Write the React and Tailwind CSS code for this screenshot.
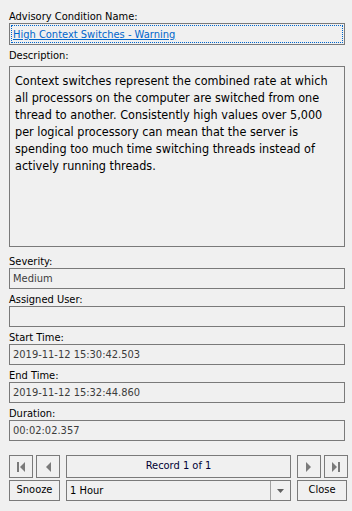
import React, { useState } from "react";

const font = { fontFamily: '"DejaVu Sans Condensed", "DejaVu Sans", sans-serif' };

const Field = ({ label, value }) => (
  <div className="flex flex-col">
    <div className="h-[13px] leading-[13px] text-[11px] text-black">{label}</div>
    <div className="h-[21px] border border-[#7a7a7a] px-[3px] text-[11px] leading-[19px] text-[#3c3c3c] bg-[#f0f0f0]">
      {value}
    </div>
  </div>
);

const NavIcon = ({ dir, bar }) => (
  <svg width="10" height="12" viewBox="0 0 10 12">
    {dir === "left" ? (
      <>
        {bar && <rect x="1" y="1" width="2" height="10" fill="#7a7a7a" />}
        <polygon points={bar ? "9,1 4,6 9,11" : "8,1 3,6 8,11"} fill="#7a7a7a" />
      </>
    ) : (
      <>
        <polygon points={bar ? "1,1 6,6 1,11" : "2,1 7,6 2,11"} fill="#7a7a7a" />
        {bar && <rect x="7" y="1" width="2" height="10" fill="#7a7a7a" />}
      </>
    )}
  </svg>
);

const NavButton = ({ children }) => (
  <button className="shrink-0 w-[24px] h-[23px] border border-[#7a7a7a] bg-[#f0f0f0] flex items-center justify-center">
    {children}
  </button>
);

export default function App() {
  const [snooze] = useState("1 Hour");

  return (
    <div className="w-[352px] h-[511px] bg-[#f0f0f0] pl-[9px] pt-[10px] flex flex-col overflow-hidden" style={font}>
      <div className="h-[13px] leading-[13px] text-[11px] text-black">Advisory Condition Name:</div>
      <div className="w-[336px] h-[22px] border border-[#7a7a7a] p-px">
        <div className="h-full border border-dotted border-[#0066cc] px-[1px] text-[11px] leading-[18px]">
          <a href="#" className="text-[#0066cc] underline">High Context Switches - Warning</a>
        </div>
      </div>

      <div className="mt-[4px] h-[13px] leading-[13px] text-[11px] text-black">Description:</div>
      <div className="mt-[4px] w-[336px] h-[181px] border border-[#7a7a7a] px-[5px] pt-[5px] text-[12.5px] leading-[17px] text-black">
        Context switches represent the combined rate at which all processors on the computer are switched from one thread to another. Consistently high values over 5,000 per logical processory can mean that the server is spending too much time switching threads instead of actively running threads.
      </div>

      <div className="mt-[8px] w-[336px] flex flex-col gap-[4px]">
        <Field label="Severity:" value="Medium" />
        <Field label="Assigned User:" value="" />
        <Field label="Start Time:" value="2019-11-12 15:30:42.503" />
        <Field label="End Time:" value="2019-11-12 15:32:44.860" />
        <Field label="Duration:" value="00:02:02.357" />
      </div>

      <div className="mt-[14px] w-[338px] flex items-center">
        <div className="flex gap-[3px] shrink-0">
          <NavButton><NavIcon dir="left" bar /></NavButton>
          <NavButton><NavIcon dir="left" /></NavButton>
        </div>
        <div className="shrink-0 ml-[6px] w-[225px] h-[23px] border border-[#7a7a7a] flex items-center justify-center text-[11px] text-[#000033]">
          Record 1 of 1
        </div>
        <div className="ml-[6px] flex gap-[3px] shrink-0">
          <NavButton><NavIcon dir="right" /></NavButton>
          <NavButton><NavIcon dir="right" bar /></NavButton>
        </div>
      </div>

      <div className="mt-[2px] w-[338px] flex items-center">
        <button className="shrink-0 w-[51px] h-[21px] border border-[#7a7a7a] bg-[#f0f0f0] text-[11px] text-black">
          Snooze
        </button>
        <div className="shrink-0 ml-[6px] w-[225px] h-[21px] border border-[#7a7a7a] flex items-stretch">
          <div className="flex-1 px-[3px] text-[11px] leading-[19px] text-black">{snooze}</div>
          <div className="w-[20px] border-l border-[#a0a0a0] flex items-center justify-center">
            <svg width="7" height="4" viewBox="0 0 7 4">
              <polygon points="0,0 7,0 3.5,4" fill="#606060" />
            </svg>
          </div>
        </div>
        <button className="shrink-0 ml-[6px] w-[50px] h-[21px] border border-[#7a7a7a] bg-[#f0f0f0] text-[11px] text-black">
          Close
        </button>
      </div>
    </div>
  );
}
